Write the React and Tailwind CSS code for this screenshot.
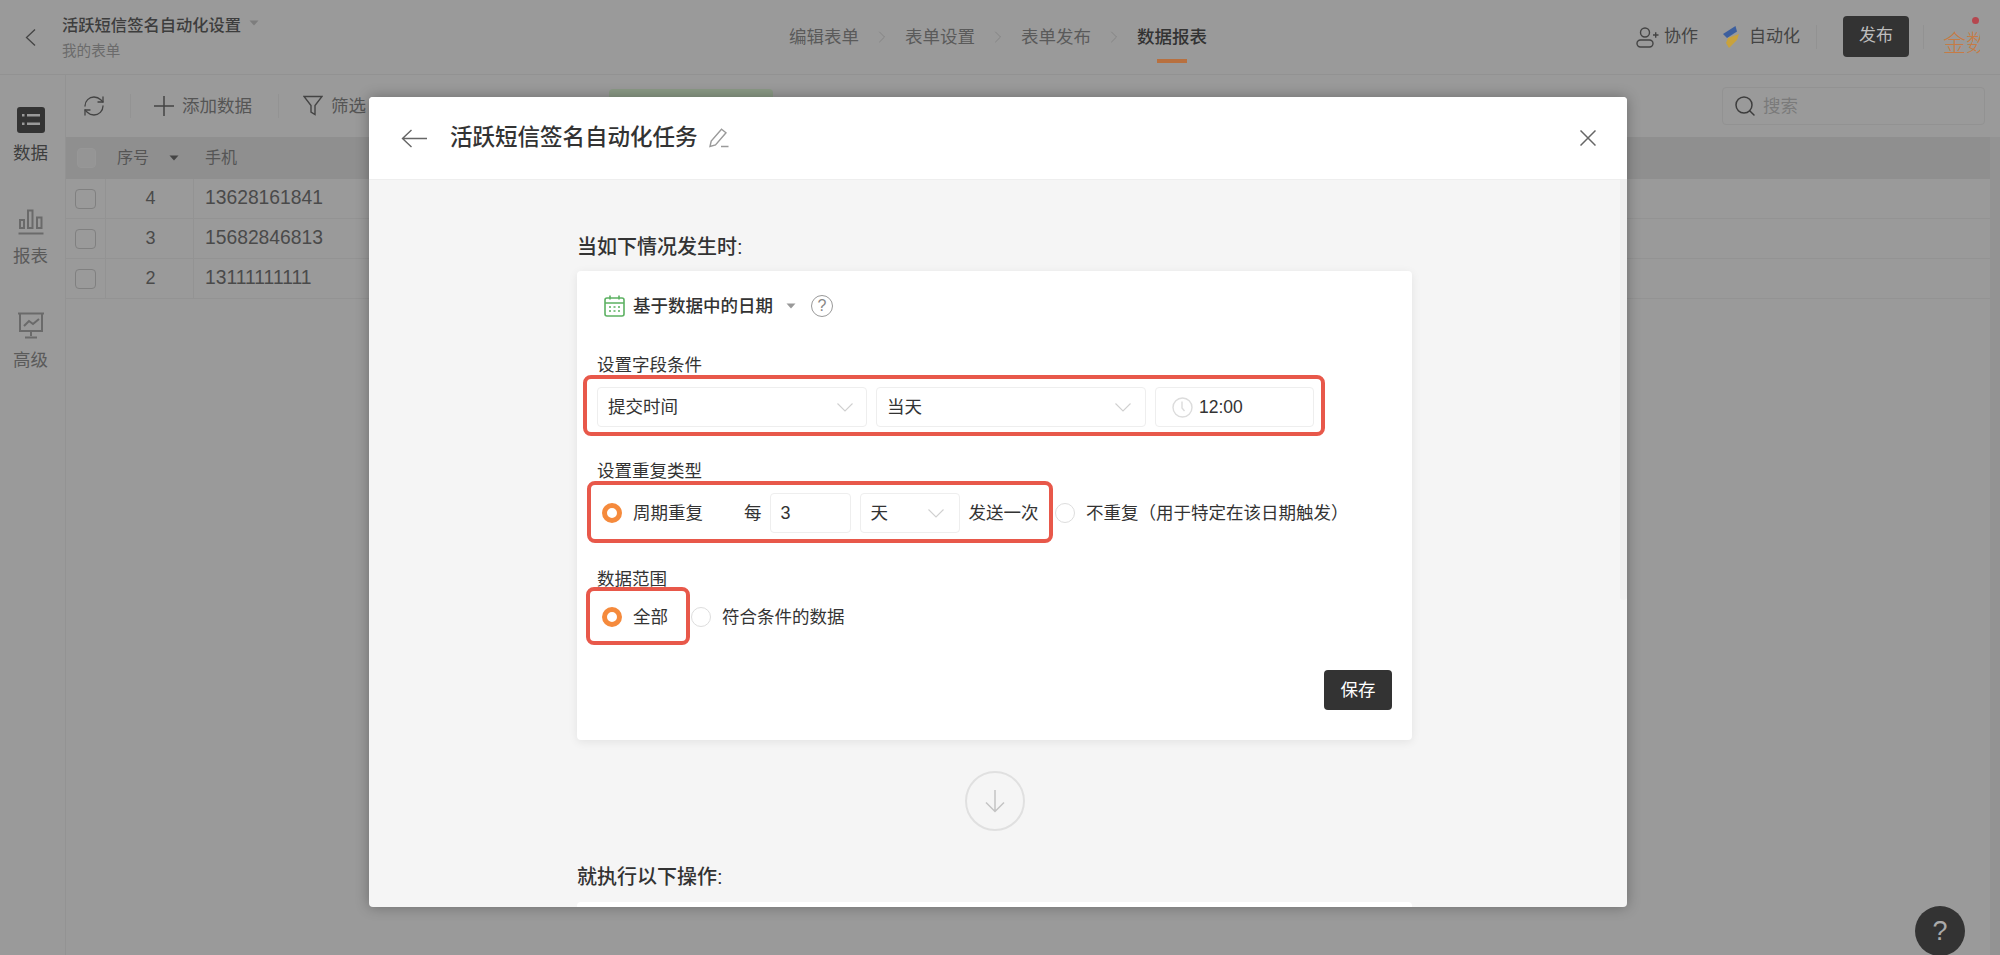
import { ChevronRight, Search, RefreshCw } from 'lucide-react';

const rows = [
  { no: 4, phone: '13628161841' },
  { no: 3, phone: '15682846813' },
  { no: 2, phone: '13111111111' },
];

function Caret({ className }) {
  return (
    <svg width="10" height="6" viewBox="0 0 10 6" className={className}>
      <path d="M0.5 0.5h9L5 5.5z" fill="currentColor" />
    </svg>
  );
}

function Select({ label, className }) {
  return (
    <div className={`flex items-center justify-between h-10 bg-white border border-[#eeeeee] rounded pl-[10px] text-[17.5px] text-[#333] ${className}`}>
      <span>{label}</span>
      <svg width="16" height="9" viewBox="0 0 16 9" fill="none" stroke="#d0d0d0" strokeWidth="1.1">
        <path d="M0.5 0.5L8 8l7.5-7.5" />
      </svg>
    </div>
  );
}

function Radio({ checked, label, className }) {
  return (
    <div className={`flex items-center gap-[11px] text-[17.5px] text-[#333] ${className || ''}`}>
      {checked ? (
        <span className="w-5 h-5 rounded-full border-[5px] border-[#f58a3c] bg-white" />
      ) : (
        <span className="w-5 h-5 rounded-full border border-[#dddddd] bg-white" />
      )}
      <span>{label}</span>
    </div>
  );
}

function Section({ title }) {
  return <h2 className="h-[30px] leading-[32px] text-[20px] font-medium text-[#333]">{title}</h2>;
}

export default function App() {
  return (
    <div className="relative w-[2000px] h-[955px] overflow-hidden bg-[#9a9a9a] font-['Liberation_Sans','Noto_Sans_CJK_SC',sans-serif]">
      {/* top bar */}
      <header className="flex items-center h-[75px] border-b border-[#929292]">
        <div className="flex items-center w-[789px] shrink-0">
          <svg width="11" height="17" viewBox="0 0 11 17" fill="none" stroke="#444" strokeWidth="1.3" className="ml-[25px]">
            <path d="M10 0.5L1.5 8.5l8.5 8" />
          </svg>
          <div className="ml-[26px]">
            <div className="flex items-center text-[16.3px] leading-[22px] font-medium text-[#3d3d3d]">
              活跃短信签名自动化设置
              <Caret className="ml-[8px] mb-[4px] text-[#7d7d7d]" />
            </div>
            <div className="mt-[5px] text-[14.6px] leading-[20px] text-[#6b6b6b]">我的表单</div>
          </div>
        </div>
        <nav className="flex items-center text-[17.5px] text-[#5a5a5a]">
          <span>编辑表单</span>
          <ChevronRight size={20} strokeWidth={1} className="mx-[13px] text-[#808080]" />
          <span>表单设置</span>
          <ChevronRight size={20} strokeWidth={1} className="mx-[13px] text-[#808080]" />
          <span>表单发布</span>
          <ChevronRight size={20} strokeWidth={1} className="mx-[13px] text-[#808080]" />
          <span className="relative font-medium text-[#333]">
            数据报表
            <span className="absolute left-[20px] top-[35px] w-[30px] h-1 bg-[#b8703f]" />
          </span>
        </nav>
        <div className="flex items-center ml-auto pr-[20px]">
          <svg width="23" height="21" viewBox="0 0 23 21" fill="none" stroke="#444" strokeWidth="1.4">
            <circle cx="9" cy="5.5" r="4.5" />
            <rect x="1" y="13" width="16" height="7" rx="3.5" />
            <path d="M17 8h5.5M19.7 5.3v5.4" />
          </svg>
          <span className="ml-[5px] text-[17px] text-[#444]">协作</span>
          <svg width="18" height="24" viewBox="0 0 18 24" className="ml-[24px]">
            <path d="M13.5 1L15 6.5 5 13 1 9z" fill="#3d5f9e" />
            <path d="M17 9l-2 6-8 8-3-5 2-5z" fill="#c9a23c" />
          </svg>
          <span className="ml-[9px] text-[17px] text-[#444]">自动化</span>
          <span className="w-px h-6 ml-[16px] bg-[#929292]" />
          <button className="ml-[26px] mb-[2px] w-[66px] h-[41px] rounded bg-[#333] text-[17px] text-[#bdbdbd]">发布</button>
          <span className="w-px h-6 ml-[14px] bg-[#929292]" />
          <div className="relative ml-[19px] mt-[12px] w-[37px] h-[28px] overflow-hidden whitespace-nowrap text-[23px] leading-[28px] font-light text-[#c67b45]">
            金数
          </div>
          <span className="absolute left-[1972px] top-[17px] w-[7px] h-[7px] rounded-full bg-[#b5474f]" />
        </div>
      </header>

      <div className="flex h-[880px]">
        {/* left rail */}
        <aside className="w-[66px] shrink-0 flex flex-col items-center pr-[4px] border-r border-[#939393] text-[17.5px]">
          <svg width="28" height="26" viewBox="0 0 28 26" className="mt-[32px]">
            <rect width="28" height="26" rx="3" fill="#333" />
            <g fill="#999">
              <rect x="5" y="7" width="2.5" height="2.5" />
              <rect x="5" y="15.5" width="2.5" height="2.5" />
              <rect x="10" y="7" width="13" height="2.5" />
              <rect x="10" y="15.5" width="13" height="2.5" />
            </g>
          </svg>
          <span className="mt-[8px] leading-[24px] text-[#3d3d3d]">数据</span>
          <svg width="26" height="26" viewBox="0 0 26 26" fill="none" stroke="#6a6a6a" strokeWidth="2" className="mt-[44px]">
            <rect x="2" y="11" width="4" height="8" />
            <rect x="10" y="1.5" width="4.5" height="17.5" />
            <rect x="19" y="8.5" width="4.5" height="10.5" />
            <path d="M0.5 24.5h25" strokeWidth="2" />
          </svg>
          <span className="mt-[9px] leading-[24px] text-[#5a5a5a]">报表</span>
          <svg width="28" height="27" viewBox="0 0 28 27" fill="none" stroke="#6a6a6a" strokeWidth="2" className="mt-[44px]">
            <path d="M1 1.5h26" strokeWidth="2" />
            <path d="M3 2v17h22V2" />
            <path d="M7 14l5-5 4 3 6-5" />
            <path d="M14 19v5M8 25.5h12" />
          </svg>
          <span className="mt-[9px] leading-[24px] text-[#5a5a5a]">高级</span>
        </aside>

        <main className="flex-1 min-w-0 flex flex-col">
          {/* toolbar */}
          <div className="flex items-center h-[62px] pr-[15px] text-[17.5px] text-[#555]">
            <RefreshCw size={24} strokeWidth={1.3} className="ml-[16px] text-[#444]" />
            <span className="w-px h-6 ml-[24px] bg-[#939393]" />
            <svg width="20" height="20" viewBox="0 0 20 20" fill="none" stroke="#444" strokeWidth="1.5" className="ml-[23px]">
              <path d="M10 0v20M0 10h20" />
            </svg>
            <span className="ml-[8px]">添加数据</span>
            <span className="w-px h-6 ml-[26px] bg-[#939393]" />
            <svg width="20" height="22" viewBox="0 0 20 22" fill="none" stroke="#444" strokeWidth="1.4" className="ml-[24px]">
              <path d="M1 1.5h18l-7 9v9l-4-2.5v-6.5z" />
            </svg>
            <span className="ml-[8px]">筛选</span>
            <span className="ml-[243px] self-start mt-[14px] w-[164px] h-[20px] rounded-t bg-[#8b9a86]" />
            <div className="flex items-center ml-auto w-[263px] h-[38px] rounded border border-[#929292] pl-[10px]">
              <Search size={24} strokeWidth={1.5} className="text-[#3d3d3d]" />
              <span className="ml-[6px] text-[#7a7a7a]">搜索</span>
            </div>
          </div>

          {/* table */}
          <div className="flex-1 border-r-[10px] border-[#939393]">
            <div className="flex items-center h-[42px] bg-[#8f8f8f] text-[16px] text-[#555]">
              <span className="ml-[11px] w-[19px] h-[20px] rounded-sm border border-[#979797] bg-[#959595]" />
              <span className="ml-[21px] w-[32px]">序号</span>
              <Caret className="ml-[20px] text-[#444]" />
              <span className="ml-[26px]">手机</span>
            </div>
            {rows.map((r) => (
              <div key={r.no} className="flex items-center h-[40px] border-b border-[#939393] text-[#4a4a4a]">
                <div className="flex items-center justify-center w-[40px] h-full border-r border-[#939393]">
                  <span className="w-[21px] h-[20px] rounded border border-[#808080]" />
                </div>
                <div className="flex items-center justify-center w-[88px] h-full pl-[2px] border-r border-[#939393] text-[18px]">{r.no}</div>
                <div className="ml-[11px] text-[19.3px]">{r.phone}</div>
              </div>
            ))}
          </div>
        </main>
      </div>

      <div className="absolute left-[1915px] top-[906px] flex items-center justify-center w-[50px] h-[50px] rounded-full bg-[#333] text-[27px] text-[#aaa]">?</div>

      {/* modal */}
      <div className="absolute left-[369px] top-[97px] flex flex-col w-[1258px] h-[810px] rounded-sm overflow-hidden bg-[#f5f5f5] shadow-[0_0_14px_rgba(0,0,0,0.3)]">
        <div className="flex items-center shrink-0 h-[83px] pl-[32px] pr-[31px] bg-white border-b border-[#eeeeee]">
          <svg width="26" height="19" viewBox="0 0 26 19" fill="none" stroke="#666" strokeWidth="1.4">
            <path d="M26 9.5H1.5M10.5 1L1.5 9.5l9 8.5" />
          </svg>
          <h1 className="ml-[23px] text-[22.5px] font-medium text-[#333]">活跃短信签名自动化任务</h1>
          <svg width="20" height="20" viewBox="0 0 20 20" fill="none" stroke="#9a9a9a" strokeWidth="1.4" className="ml-[11px]">
            <path d="M1 18.5l1.2-5.5L12.5 1.2l4.5 3.6L6.5 17z" />
            <path d="M12 18.5h7.5" />
          </svg>
          <svg width="16" height="16" viewBox="0 0 16 16" fill="none" stroke="#666" strokeWidth="1.5" className="ml-auto">
            <path d="M0.5 0.5l15 15M15.5 0.5l-15 15" />
          </svg>
        </div>

        <div className="relative flex-1 overflow-hidden pl-[208px] pt-[51px]">
          <div className="absolute right-0 top-0 w-[7px] h-[420px] rounded-b bg-[#f0f0f0]" />
          <div className="w-[835px]">
            <Section title="当如下情况发生时:" />
            <div className="mt-[10px] pt-[15px] px-[20px] pb-[30px] bg-white rounded-sm shadow-[0_2px_10px_rgba(0,0,0,0.08)]">
              <div className="flex items-center h-10 ml-[7px]">
                <svg width="21" height="22" viewBox="0 0 21 22" fill="none" stroke="#5cb162" strokeWidth="1.6">
                  <rect x="1" y="3" width="19" height="18" rx="2" />
                  <path d="M1 8h19M6 0.5v4M15 0.5v4" />
                  <path d="M5 12h2M9.5 12h2M14 12h2M5 16h2M9.5 16h2M14 16h2" />
                </svg>
                <span className="ml-[8px] text-[17.5px] font-medium text-[#333]">基于数据中的日期</span>
                <Caret className="ml-[13px] text-[#999]" />
                <span className="flex items-center justify-center ml-[15px] w-[22px] h-[22px] rounded-full border-[1.5px] border-[#999] text-[16px] text-[#888]">?</span>
              </div>

              <div className="mt-[29px] h-5 leading-5 text-[17.5px] text-[#333]">设置字段条件</div>
              <div className="flex gap-[9px] w-[742px] -ml-[14px] pl-[10px] pt-2 pb-[5px] pr-[7px] border-4 border-[#e8584a] rounded-lg">
                <Select label="提交时间" className="w-[270px] pr-[13px]" />
                <Select label="当天" className="w-[270px] pr-[14px]" />
                <div className="flex items-center w-[159px] h-10 bg-white border border-[#eeeeee] rounded pl-[16px] text-[17.5px] text-[#333]">
                  <svg width="21" height="21" viewBox="0 0 21 21" fill="none" stroke="#dcdcdc" strokeWidth="1.4">
                    <circle cx="10.5" cy="10.5" r="9.5" />
                    <path d="M10 4.5v6.5l2.5 3" />
                  </svg>
                  <span className="ml-[6px]">12:00</span>
                </div>
              </div>

              <div className="mt-[25px] h-5 leading-5 text-[17.5px] text-[#333]">设置重复类型</div>
              <div className="flex items-center">
                <div className="flex items-center w-[466px] h-[62px] -ml-[10px] pl-[11px] pt-[2px] border-4 border-[#e8584a] rounded-lg text-[17.5px] text-[#333]">
                  <Radio checked label="周期重复" />
                  <span className="ml-[41px]">每</span>
                  <div className="flex items-center ml-[8px] w-[81px] h-10 border border-[#eeeeee] rounded pl-[10px] text-[18px]">3</div>
                  <Select label="天" className="ml-[9px] w-[100px] pr-[15px]" />
                  <span className="ml-[9px]">发送一次</span>
                </div>
                <Radio label="不重复（用于特定在该日期触发）" className="ml-[2px] mt-[2px]" />
              </div>

              <div className="mt-[25px] h-[19px] leading-[22px] text-[17.5px] text-[#333]">数据范围</div>
              <div className="flex items-center">
                <div className="flex items-center w-[104px] h-[58px] -ml-[11px] pl-[12px] pt-[2px] border-4 border-[#e8584a] rounded-lg">
                  <Radio checked label="全部" />
                </div>
                <Radio label="符合条件的数据" className="ml-[1px] mt-[2px]" />
              </div>

              <div className="flex justify-end mt-[25px]">
                <button className="w-[68px] h-10 rounded bg-[#333] text-[17.5px] text-white">保存</button>
              </div>
            </div>

            <div className="flex items-center justify-center mx-auto mt-[31px] w-[60px] h-[60px] rounded-full border-2 border-[#e0e0e0]">
              <svg width="20" height="23" viewBox="0 0 20 23" fill="none" stroke="#c4c4c4" strokeWidth="1.5">
                <path d="M10 0v21.5M1 12.5l9 9 9-9" />
              </svg>
            </div>

            <div className="mt-[30px]">
              <Section title="就执行以下操作:" />
            </div>
            <div className="mt-[11px] h-[60px] bg-white rounded-sm" />
          </div>
        </div>
      </div>
    </div>
  );
}
